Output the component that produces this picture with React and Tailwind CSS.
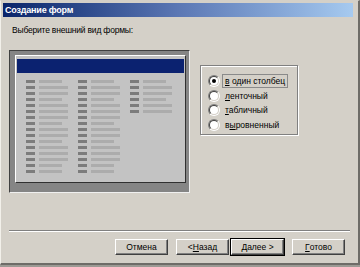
import React from 'react';

const col1 = [23, 29, 29, 23, 29, 29, 29, 23, 29, 29, 23, 29, 29, 29, 23, 23];
const col2 = [23, 29, 29, 23, 29, 29, 29, 23, 29, 29, 23, 29, 29, 29, 23, 23];
const col3 = [23, 29, 29, 23, 29, 29];

const Column = ({ rows }) => (
  <div className="flex flex-col gap-[3px] w-[52px]">
    {rows.map((w, i) => (
      <div key={i} className="flex items-center gap-[4px] h-[3px]">
        <div className="w-[9px] h-[3px] bg-[#7c7c7c]" />
        <div className="h-[3px] bg-[#acacac]" style={{ width: w }} />
      </div>
    ))}
  </div>
);

const Radio = ({ checked }) => (
  <div className="w-[12px] h-[12px] rounded-full border border-t-[#808080] border-l-[#808080] border-r-white border-b-white shrink-0">
    <div className="w-full h-full rounded-full border border-t-[#404040] border-l-[#404040] border-r-[#d4d0c8] border-b-[#d4d0c8] bg-white flex items-center justify-center">
      {checked && <div className="w-[4px] h-[4px] rounded-full bg-black" />}
    </div>
  </div>
);

const Button = ({ children, isDefault }) => (
  <div className={isDefault ? 'border border-black' : 'border border-transparent'}>
    <div className="w-[53px] h-[16px] border border-t-white border-l-white border-r-[#404040] border-b-[#404040] shadow-[inset_-1px_-1px_0_#808080] flex items-center justify-center text-[8.5px] leading-none text-black whitespace-nowrap">
      {children}
    </div>
  </div>
);

export default function App() {
  const options = [
    { u: 'в', rest: ' один столбец', checked: true },
    { u: 'л', rest: 'енточный' },
    { pre: '', u: 'т', rest: 'абличный' },
    { pre: 'в', u: 'ы', rest: 'ровненный' },
  ];

  return (
    <div className="w-[360px] h-[267px] bg-[#9c9a94] font-['Liberation_Sans',Arial,sans-serif]">
      <div className="w-[360px] h-[265px] bg-[#d4d0c8] border-l border-t border-l-[#f2f0ea] border-t-[#d4d0c8] border-r-2 border-b-2 border-r-[#6e6c68] border-b-[#6e6c68] p-[2px] flex flex-col">
        <div className="h-[14px] mr-[3px] bg-gradient-to-r from-[#0a246a] via-[#5b77b4] to-[#a6caf0] text-white font-bold text-[9px] leading-[14px] pl-[2px] tracking-[-0.2px]">
          Создание форм
        </div>

        <div className="flex flex-col pl-[6px]">
          <p className="mt-[7px] ml-[3px] text-[8.5px] leading-[13px] text-black whitespace-nowrap tracking-[-0.2px]">Выберите внешний вид формы:</p>

          <div className="flex mt-[13px]">
            <div className="w-[181px] h-[143px] bg-[#858585] border border-t-[#404040] border-l-[#404040] border-r-[#f0f0f0] border-b-[#f0f0f0] pt-[4px] pl-[5px]">
              <div className="w-[171px] h-[128px] bg-[#c3c3c3] border border-t-white border-l-white border-r-[#303030] border-b-[#303030] flex flex-col">
                <div className="mt-[3px] mx-[1px] h-[14px] bg-[#0b2270]" />
                <div className="flex mt-[7px] pl-[10px]">
                  <Column rows={col1} />
                  <Column rows={col2} />
                  <Column rows={col3} />
                </div>
              </div>
            </div>

            <div className="ml-[10px] mt-[15px] w-[98px] h-[70px] border border-[#808080] shadow-[inset_1px_1px_0_#fff,1px_1px_0_#fff] pl-[7px] pt-[8px] flex flex-col">
              {options.map((o, i) => (
                <div key={i} className="flex items-center h-[14.5px]">
                  <Radio checked={o.checked} />
                  <span
                    className={
                      'ml-[2px] px-[2px] text-[8.5px] leading-[12px] text-black border whitespace-nowrap ' +
                      (o.checked ? 'border-[#8a8a8a]' : 'border-transparent')
                    }
                  >
                    {o.pre}
                    <span className="underline">{o.u}</span>
                    {o.rest}
                  </span>
                </div>
              ))}
            </div>
          </div>

          <div className="mt-[37px] mr-[6px] h-[2px] border-t border-t-[#808080] border-b border-b-white" />

          <div className="flex mt-[6px] pl-[105px]">
            <Button>Отмена</Button>
            <div className="ml-[6px]">
              <Button>
                {'< '}
                <span className="underline">Н</span>азад
              </Button>
            </div>
            <Button isDefault>
              <span className="underline">Д</span>
              {'алее >'}
            </Button>
            <div className="ml-[6px]">
              <Button>
                <span className="underline">Г</span>отово
              </Button>
            </div>
          </div>
        </div>
      </div>
    </div>
  );
}
